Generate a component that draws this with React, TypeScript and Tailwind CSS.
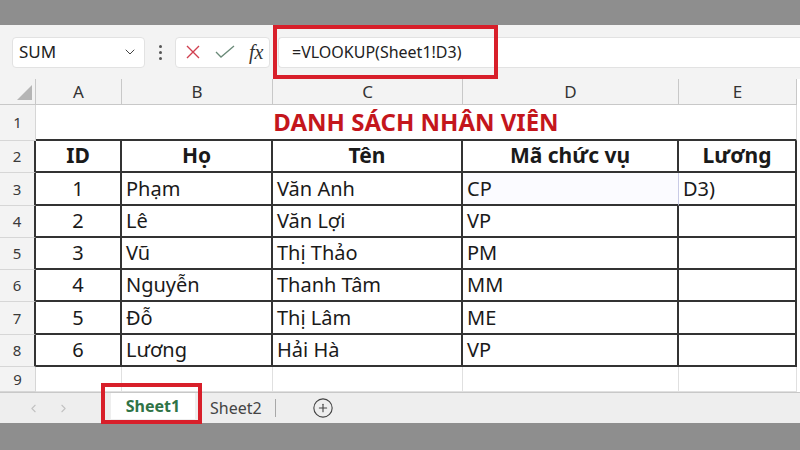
import React from "react";
import { ChevronDown, ChevronLeft, ChevronRight, CirclePlus } from "lucide-react";

const staff = [
  { id: "1", ho: "Phạm", ten: "Văn Anh", ma: "CP", luong: "D3)" },
  { id: "2", ho: "Lê", ten: "Văn Lợi", ma: "VP", luong: "" },
  { id: "3", ho: "Vũ", ten: "Thị Thảo", ma: "PM", luong: "" },
  { id: "4", ho: "Nguyễn", ten: "Thanh Tâm", ma: "MM", luong: "" },
  { id: "5", ho: "Đỗ", ten: "Thị Lâm", ma: "ME", luong: "" },
  { id: "6", ho: "Lương", ten: "Hải Hà", ma: "VP", luong: "" },
];

const cols = ["A", "B", "C", "D", "E"];

function RowHead({ n, dark }: { n: number; dark?: boolean }) {
  return (
    <div
      className={
        dark
          ? "flex items-center justify-center bg-[#f3f3f3] border-b border-[#d6d6d6] border-r-2 border-r-[#333] text-[15px] text-[#3a3a3a]"
          : "flex items-center justify-center bg-[#f3f3f3] border-b border-r border-[#d6d6d6] text-[15px] text-[#3a3a3a]"
      }
    >
      {n}
    </div>
  );
}

export default function App() {
  return (
    <div className="w-[800px] h-[450px] overflow-hidden flex flex-col bg-white font-['Noto_Sans',sans-serif] text-[#1a1a1a]">
      <div className="h-[25px] bg-[#8e8e8e]" />

      {/* formula bar */}
      <div className="h-[54px] flex items-center bg-[#f3f3f3]">
        <div className="ml-[12px] w-[133px] h-[31px] flex items-center justify-between rounded-[4px] bg-white border border-[#e2e2e2] pl-[6px] pr-[6px]">
          <span className="text-[17px] text-[#222]">SUM</span>
          <ChevronDown size={16} strokeWidth={1.5} className="text-[#444]" />
        </div>
        <div className="w-[30px] flex flex-col items-center gap-[3px]">
          <span className="w-[3px] h-[3px] rounded-full bg-[#555]" />
          <span className="w-[3px] h-[3px] rounded-full bg-[#555]" />
          <span className="w-[3px] h-[3px] rounded-full bg-[#555]" />
        </div>
        <div className="w-[95px] h-[31px] flex items-center rounded-[4px] bg-white border border-[#e2e2e2] pl-[9px] gap-[14px]">
          <svg width="16" height="16" viewBox="0 0 16 16">
            <path d="M2 2L14 14M14 2L2 14" stroke="#d04050" strokeWidth="1.4" fill="none" />
          </svg>
          <svg width="20" height="16" viewBox="0 0 20 16">
            <path d="M1 8L6 13L19 2" stroke="#6a8a78" strokeWidth="1.3" fill="none" />
          </svg>
          <span className="font-['Liberation_Serif',serif] italic text-[20px] leading-none text-[#333]">fx</span>
        </div>
        <div className="ml-[3px] h-[54px] w-[225px] border-4 border-[#d81f2a] flex items-center pl-[1px]">
          <div className="flex-1 h-[31px] flex items-center bg-white rounded-l-[4px] border-y border-l border-[#e2e2e2] pl-[13px] text-[16px] text-[#222]">
            =VLOOKUP(Sheet1!D3)
          </div>
        </div>
        <div className="flex-1 h-[31px] bg-white border-y border-[#e2e2e2]" />
      </div>

      {/* sheet grid */}
      <div className="grid grid-cols-[36px_86px_151px_190px_216px_118px] grid-rows-[26px_36px_32px_33px_32px_32px_32px_33px_32px_25px]">
        <div className="relative bg-[#f3f3f3] border-r border-b border-[#c8c8c8]">
          <svg className="absolute right-[3px] bottom-[4px]" width="15" height="15" viewBox="0 0 15 15">
            <path d="M15 0L15 15L0 15Z" fill="#b5b5b5" />
          </svg>
        </div>
        {cols.map((c) => (
          <div
            key={c}
            className="flex items-center justify-center bg-[#f3f3f3] border-r border-b border-[#c8c8c8] text-[17px] text-[#333]"
          >
            {c}
          </div>
        ))}

        <RowHead n={1} />
        <div className="col-span-5 flex items-center justify-center border-b-2 border-[#333] border-r border-r-[#dadada] text-[24px] font-bold text-[#c4161c]">
          DANH SÁCH NHÂN VIÊN
        </div>

        <RowHead n={2} dark />
        <div className="flex items-center justify-center border-r-2 border-b-2 border-[#333] text-[21px] font-bold">ID</div>
        <div className="flex items-center justify-center border-r-2 border-b-2 border-[#333] text-[21px] font-bold">Họ</div>
        <div className="flex items-center justify-center border-r-2 border-b-2 border-[#333] text-[21px] font-bold">Tên</div>
        <div className="flex items-center justify-center border-r-2 border-b-2 border-[#333] text-[21px] font-bold">Mã chức vụ</div>
        <div className="flex items-center justify-center border-r-2 border-b-2 border-[#333] text-[21px] font-bold">Lương</div>

        {staff.map((s, i) => (
          <React.Fragment key={s.id}>
            <RowHead n={i + 3} dark />
            <div className="flex items-center justify-center border-r-2 border-b-2 border-[#333] text-[20px]">{s.id}</div>
            <div className="flex items-center pl-[4px] border-r-2 border-b-2 border-[#333] text-[20px]">{s.ho}</div>
            <div className="flex items-center pl-[4px] border-r-2 border-b-2 border-[#333] text-[20px]">{s.ten}</div>
            <div
              className={
                i === 0
                  ? "flex items-center pl-[4px] border-b-2 border-[#333] border-r border-r-[#c9cbe6] bg-[#fbfbff] text-[20px]"
                  : "flex items-center pl-[4px] border-r-2 border-b-2 border-[#333] text-[20px]"
              }
            >
              {s.ma}
            </div>
            <div className="flex items-center pl-[4px] border-r-2 border-b-2 border-[#333] text-[20px]">{s.luong}</div>
          </React.Fragment>
        ))}

        <RowHead n={9} />
        <div className="border-r border-b border-[#e0e0e0]" />
        <div className="border-r border-b border-[#e0e0e0]" />
        <div className="border-r border-b border-[#e0e0e0]" />
        <div className="border-r border-b border-[#e0e0e0]" />
        <div className="border-r border-b border-[#e0e0e0]" />
      </div>

      {/* sheet tabs */}
      <div className="relative h-[31px] flex items-center bg-[#eeeeee] border-t border-[#c8c8c8]">
        <div className="flex items-center gap-[17px] pl-[27px] text-[#c2c2c2]">
          <ChevronLeft size={13} strokeWidth={2} />
          <ChevronRight size={13} strokeWidth={2} />
        </div>
        <div className="ml-[41px] self-start h-[26px] w-[84px] flex items-center justify-center bg-white text-[16px] font-bold text-[#2f7346]">
          Sheet1
        </div>
        <div className="ml-[15px] text-[16px] text-[#444]">Sheet2</div>
        <div className="ml-[13px] w-px h-[18px] bg-[#a8a8a8]" />
        <CirclePlus size={22} strokeWidth={1.2} className="ml-[36px] text-[#444]" />
        <div className="absolute left-[101px] top-[-10px] w-[101px] h-[41px] border-4 border-[#d81f2a]" />
      </div>

      <div className="flex-1 bg-[#8e8e8e]" />
    </div>
  );
}
